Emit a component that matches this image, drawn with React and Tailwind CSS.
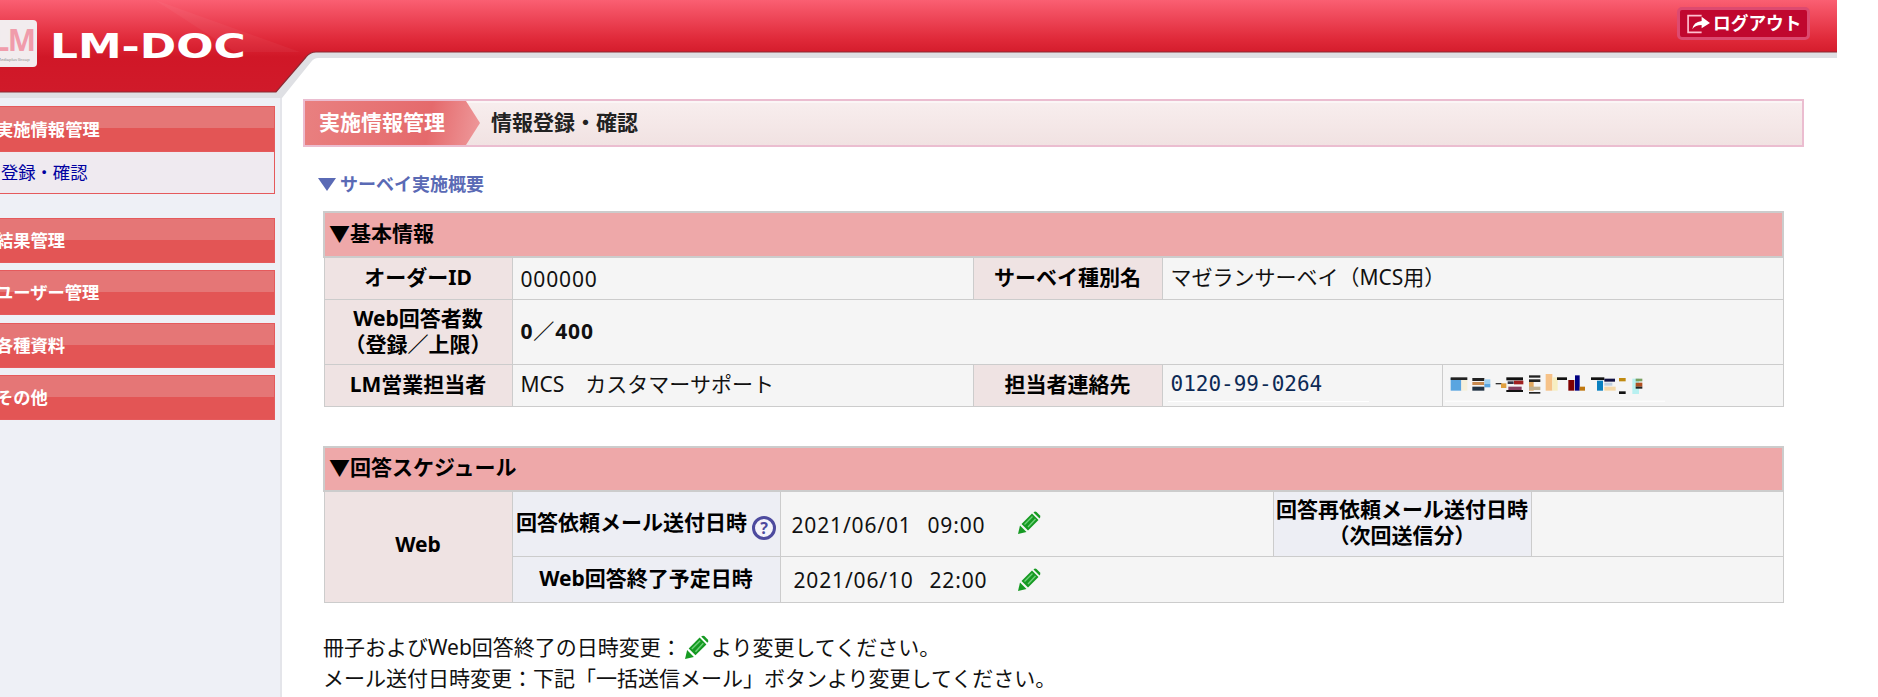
import React from 'react';

const jp = "font-['Noto_Sans','Noto_Sans_CJK_JP',sans-serif]";
const th = 'border border-[#cccccc] bg-[#efe3e3] text-center font-bold text-black leading-[26px] p-0 pb-[2px]';
const thBlue = 'border border-[#cccccc] bg-[#edeef4] text-center font-bold text-black leading-[26px] p-0 pb-[3px]';
const td = 'border border-[#cccccc] bg-[#f5f5f5] text-[#111] leading-[26px] py-0 pb-[2px] pl-[8px] pr-0';
const caption = 'border-2 border-[#cccccc] bg-[#eea8a9] text-left font-bold text-black px-[4px] py-0 pb-[1px]';

const mosaic = [
  [5, 12, 32, 38, '#5aa5e0'], [37, 18, 18, 32, '#f5f0dc'], [5, 10, 50, 8, '#222222'],
  [70, 12, 36, 9, '#222222'], [70, 24, 36, 9, '#c88a50'], [70, 38, 36, 12, '#223344'], [106, 16, 18, 14, '#9fd0f0'], [106, 30, 18, 10, '#5aa5e0'],
  [140, 27, 18, 4, '#333333'], [156, 28, 16, 14, '#e0a040'],
  [172, 10, 50, 9, '#111111'], [176, 22, 18, 8, '#333344'], [195, 20, 28, 11, '#a02020'], [178, 38, 40, 10, '#864060'], [172, 48, 50, 6, '#111111'],
  [240, 4, 34, 7, '#222222'], [240, 16, 34, 8, '#222222'], [240, 24, 14, 26, '#e0a860'], [240, 38, 34, 10, '#c0b090'], [240, 54, 34, 5, '#222222'], [290, 0, 20, 50, '#f6c288'], [310, 10, 16, 40, '#f7eec0'],
  [324, 10, 30, 8, '#111111'], [358, 18, 18, 32, '#800000'], [378, 4, 14, 46, '#000080'], [392, 38, 16, 12, '#c07810'],
  [426, 10, 40, 8, '#111111'], [444, 20, 18, 30, '#0a80c0'], [466, 14, 32, 9, '#111144'], [466, 26, 24, 9, '#c0d0e0'], [466, 38, 34, 12, '#f5d8a8'], [510, 12, 20, 10, '#c08a10'], [510, 52, 20, 8, '#111111'],
  [550, 14, 20, 46, '#b8f0f0'], [560, 14, 20, 8, '#79a060'], [560, 26, 20, 12, '#b05020'], [560, 38, 20, 6, '#222222'],
];

function Pencil({ className }) {
  return (
    <svg viewBox="0 0 24 24" className={className} fill="#169a22">
      <path d="M1 23 L3 14.5 L9.5 21 Z" />
      <path d="M4.5 13 L15 2.5 L21.5 9 L11 19.5 Z" />
      <path d="M16.5 1.5 Q18 0 19.5 1 L23 4.5 Q24 6 22.5 7.5 Z" />
      <path d="M7.5 13.5 L15.5 5.5 M11 16 L18.5 8" stroke="#6fd07a" strokeWidth="1.4" fill="none" />
    </svg>
  );
}

function HelpIcon() {
  return (
    <span className="ml-[5px] inline-flex h-[24px] w-[24px] translate-y-[4px] items-center justify-center rounded-full border-[3px] border-[#4d4a9e] bg-[#f4f3fa] text-[16px] leading-none font-bold text-[#4d4a9e]">
      ?
    </span>
  );
}

function Header() {
  return (
    <header className="relative h-[98px] w-[1837px]">
      <svg className="absolute inset-0" width="1837" height="98" viewBox="0 0 1837 98">
        <defs>
          <linearGradient id="red" gradientUnits="userSpaceOnUse" x1="0" y1="0" x2="0" y2="92">
            <stop offset="0" stopColor="#fa5f72" />
            <stop offset="0.42" stopColor="#e02a3a" />
            <stop offset="0.62" stopColor="#d01727" />
            <stop offset="1" stopColor="#d01a2a" />
          </linearGradient>
        </defs>
        <path d="M0 92 H276 L306 57 Q310 52 316 52 H1837 V58 H318 Q314 58 311 62 L282 98 H0 Z" fill="#dfe0e4" />
        <path d="M0 0 H1837 V52 H316 Q310 52 306 57 L276 92 H0 Z" fill="url(#red)" />
        <path d="M155 0 L300 52 L235 52 Z" fill="#ffffff" opacity="0.04" />
        <path d="M0 92 H276 L306 57 Q310 52 316 52 H1837" fill="none" stroke="#8a2a33" strokeWidth="1.2" />
      </svg>
      <div className="relative flex items-start justify-between">
        <div className="flex items-start">
          <div className="-ml-[10px] mt-[20px] flex h-[47px] w-[47px] flex-col items-center rounded-[4px] bg-[#f2ecee] pt-[3px]">
            <span className="h-[34px] text-[30px] leading-[34px] font-bold tracking-tighter text-[#f09cab]">LM</span>
            <span className="text-[4px] leading-[6px] whitespace-nowrap text-[#888888]">Mediaplus Group</span>
          </div>
          <span className="mt-[26px] ml-[13px] inline-block origin-left scale-x-[1.29] font-['DejaVu_Sans',sans-serif] text-[34px] leading-[40px] font-bold text-white">
            LM-DOC
          </span>
        </div>
        <button className="mt-[7px] mr-[27px] flex h-[33px] w-[133px] items-center rounded-[5px] border-[3px] border-[#dd4a70] bg-[#c0072f] pl-[6px] text-[17.7px] leading-none font-bold text-white">
          <svg width="25" height="22" viewBox="0 0 24 20" fill="none" className="mr-[2px]">
            <path d="M15 2 H2 V18 H15" stroke="#ffc0d0" strokeWidth="1.6" />
            <path d="M6 15 Q7 8 15 7 V3 L23 9 L15 14 V11 Q9 11 6 15 Z" fill="#ffffff" />
          </svg>
          ログアウト
        </button>
      </div>
    </header>
  );
}

function SideItem({ label, mt }) {
  return (
    <div className={`${mt} relative h-[45px] w-[295px] border border-[#e55a5c] bg-[linear-gradient(#e57676_0,#e57676_48%,#e35555_48%,#e35555_100%)] pl-[15px] text-[17.3px] leading-[43px] font-bold text-white`}>
      {label}
    </div>
  );
}

function Sidebar() {
  return (
    <aside className="h-[599px] w-[282px] shrink-0 overflow-hidden border-r-2 border-[#e4e5ea] bg-[#eef0f6] pt-[8px]">
      <div className="-ml-[20px]">
        <div className="h-[46px] w-[295px] border border-[#e55a5c] bg-[linear-gradient(#e57676_0,#e57676_48%,#e35555_48%,#e35555_100%)] pl-[15px] text-[17.3px] leading-[45px] font-bold text-white">
          実施情報管理
        </div>
        <div className="h-[42px] w-[295px] border border-t-0 border-[#e55a5c] bg-[#efeaf0] pl-[20px] text-[17.3px] leading-[42px] text-[#0000a0]">
          登録・確認
        </div>
        <SideItem label="結果管理" mt="mt-[24px]" />
        <SideItem label="ユーザー管理" mt="mt-[7px]" />
        <SideItem label="各種資料" mt="mt-[8px]" />
        <SideItem label="その他" mt="mt-[7px]" />
      </div>
    </aside>
  );
}

function BasicInfo() {
  return (
    <table className="w-[1459px] table-fixed border-collapse text-[21px]">
      <colgroup>
        <col className="w-[188px]" />
        <col className="w-[461px]" />
        <col className="w-[189px]" />
        <col className="w-[280px]" />
        <col className="w-[341px]" />
      </colgroup>
      <tbody>
        <tr className="h-[45px]">
          <td colSpan={5} className={caption}>▼基本情報</td>
        </tr>
        <tr className="h-[42px]">
          <th className={th}>オーダーID</th>
          <td className={`${td} pt-[3px] tracking-[0.04em]`}>000000</td>
          <th className={th}>サーベイ種別名</th>
          <td colSpan={2} className={td}>マゼランサーベイ（MCS用）</td>
        </tr>
        <tr className="h-[65px]">
          <th className={th}>Web回答者数<br />（登録／上限）</th>
          <td colSpan={4} className={`${td} font-bold tracking-[0.04em]`}>0／400</td>
        </tr>
        <tr className="h-[42px]">
          <th className={th}>LM営業担当者</th>
          <td className={td}>MCS　カスタマーサポート</td>
          <th className={th}>担当者連絡先</th>
          <td className="border border-[#cccccc] bg-[#f5f5f5] p-0 pl-[5px]">
            <span className="inline-block h-[32px] w-[201px] border-b border-white pl-[3px] font-['DejaVu_Sans_Mono',monospace] text-[21px] leading-[28px] text-[#0d2a55]">
              0120-99-0264
            </span>
          </td>
          <td className="border border-[#cccccc] bg-[#f5f5f5] p-0 pt-[5px] pl-[2px]">
            <svg width="220" height="28" viewBox="0 0 660 84" className="block">
              {mosaic.map(([x, y, w, h, c], i) => (
                <rect key={i} x={x + 12} y={y} width={w} height={h} fill={c} />
              ))}
              <rect x="0" y="80" width="660" height="3" fill="#ffffff" />
            </svg>
          </td>
        </tr>
      </tbody>
    </table>
  );
}

function Schedule() {
  return (
    <table className="mt-[39px] w-[1459px] table-fixed border-collapse text-[21px]">
      <colgroup>
        <col className="w-[188px]" />
        <col className="w-[268px]" />
        <col className="w-[493px]" />
        <col className="w-[258px]" />
        <col className="w-[252px]" />
      </colgroup>
      <tbody>
        <tr className="h-[44px]">
          <td colSpan={5} className={caption}>▼回答スケジュール</td>
        </tr>
        <tr className="h-[66px]">
          <th rowSpan={2} className={`${th} pb-[5px]`}>Web</th>
          <th className={`${thBlue} whitespace-nowrap`}>回答依頼メール送付日時<HelpIcon /></th>
          <td className={td}>
            <div className="flex items-center pt-[4px] pl-[3px] tracking-[0.04em]">
              <span className="w-[136px]">2021/06/01</span>
              <span className="w-[89px]">09:00</span>
              <Pencil className="-mt-[3px] h-[24px] w-[24px]" />
            </div>
          </td>
          <th className={`${thBlue} whitespace-nowrap`}>回答再依頼メール送付日時<br />（次回送信分）</th>
          <td className={td}></td>
        </tr>
        <tr className="h-[46px]">
          <th className={`${thBlue} pb-[4px]`}>Web回答終了予定日時</th>
          <td colSpan={3} className={td}>
            <div className="flex items-center pt-[2px] pl-[5px] tracking-[0.04em]">
              <span className="w-[136px]">2021/06/10</span>
              <span className="w-[87px]">22:00</span>
              <Pencil className="h-[24px] w-[24px]" />
            </div>
          </td>
        </tr>
      </tbody>
    </table>
  );
}

export default function App() {
  return (
    <div className={`${jp} h-[697px] w-full overflow-hidden bg-white`}>
      <Header />
      <div className="flex w-[1837px]">
        <Sidebar />
        <main className="flex-1 pt-px">
          <div className="ml-[21px] flex h-[48px] w-[1501px] items-center border-2 border-[#ebbdd0] bg-[linear-gradient(#f8eeee,#f1e2e2)] shadow-[inset_0_2px_0_#fbf6f6]">
            <div className="flex h-full w-[175px] items-center bg-[linear-gradient(100deg,#e98080,#e56a6c_70%,#ee9a9c)] pl-[14px] text-[21px] font-bold text-white [clip-path:polygon(0_0,calc(100%-14px)_0,100%_50%,calc(100%-14px)_100%,0_100%)]">
              実施情報管理
            </div>
            <span className="ml-[11px] text-[21px] font-bold text-[#222]">情報登録・確認</span>
          </div>
          <div className="mt-[24px] ml-[36px] flex h-[26px] items-center text-[18px] font-bold text-[#5a6ab5]">
            <svg width="18" height="13" viewBox="0 0 18 13" className="mr-[4px]">
              <path d="M0 0 H18 L9 13 Z" fill="#5a6ab5" />
            </svg>
            サーベイ実施概要
          </div>
          <div className="mt-[14px] ml-[41px]">
            <BasicInfo />
            <Schedule />
            <div className="mt-[29px] text-[21px] leading-[31px] text-[#111]">
              <p className="flex items-center">
                冊子およびWeb回答終了の日時変更：
                <Pencil className="mx-[2px] h-[25px] w-[25px]" />
                より変更してください。
              </p>
              <p>メール送付日時変更：下記「一括送信メール」ボタンより変更してください。</p>
            </div>
          </div>
        </main>
      </div>
    </div>
  );
}
